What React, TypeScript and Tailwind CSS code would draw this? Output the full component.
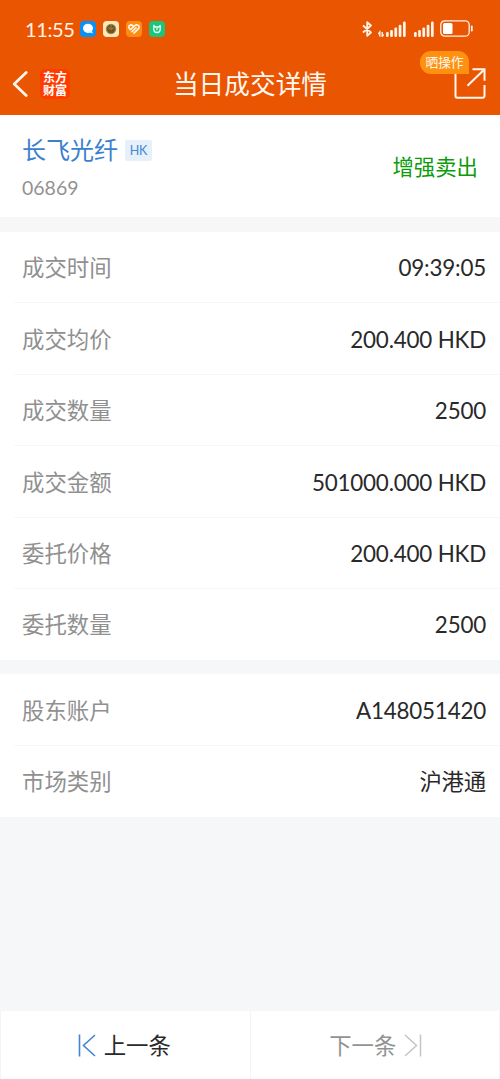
import React from 'react';

interface RowData {
  label: string;
  value: string;
}

const tradeRows: RowData[] = [
  { label: '成交时间', value: '09:39:05' },
  { label: '成交均价', value: '200.400 HKD' },
  { label: '成交数量', value: '2500' },
  { label: '成交金额', value: '501000.000 HKD' },
  { label: '委托价格', value: '200.400 HKD' },
  { label: '委托数量', value: '2500' },
];

const accountRows: RowData[] = [
  { label: '股东账户', value: 'A148051420' },
  { label: '市场类别', value: '沪港通' },
];

const Signal = () => (
  <svg className="w-5 h-4" viewBox="0 0 20 16" fill="#fff4e8">
    <rect x="0" y="11" width="2.7" height="5" rx="1.2" />
    <rect x="4.2" y="9" width="2.7" height="7" rx="1.2" />
    <rect x="8.4" y="6.5" width="2.7" height="9.5" rx="1.2" />
    <rect x="12.7" y="3.7" width="2.7" height="12.3" rx="1.2" />
    <rect x="17" y="0.5" width="2.7" height="15.5" rx="1.2" />
  </svg>
);

const StatusBar = () => (
  <div className="flex items-center h-[57px] pl-[25px] pr-[26px] text-[#fff4e8]">
    <span className="w-[49px] text-[20px] leading-none tracking-[-0.4px] whitespace-nowrap pt-px">11:55</span>
    <div className="flex gap-[7px] ml-[5.500px]">
      <svg className="w-4 h-4" viewBox="0 0 16 16">
        <rect width="16" height="16" rx="4" fill="#0a91f5" />
        <ellipse cx="8" cy="7.3" rx="5" ry="4.6" fill="#fff" />
        <path d="M8 11l4.800 1.600-1.300-4z" fill="#e4f4ff" />
      </svg>
      <svg className="w-4 h-4" viewBox="0 0 16 16">
        <rect width="16" height="16" rx="4" fill="#fdebbd" />
        <circle cx="8" cy="8" r="5.3" fill="#ad8c4c" />
        <circle cx="8" cy="8" r="4.200" fill="#6d5424" />
        <path d="M8 4v4M5 6.500l3 2 3-2" stroke="#a98338" strokeWidth="1" fill="none" />
      </svg>
      <svg className="w-4 h-4" viewBox="0 0 16 16">
        <rect width="16" height="16" rx="4" fill="#ff8b12" />
        <path d="M7 4.800C5.400 3.300 2.800 4 2.800 6c0 1.200.8 2 1.600 2.700L8.900 4.600c1.500-1.400 4.300-.8 4.300 1.400 0 1-.6 1.700-1.300 2.400L8 12.200M6 10.600l4-3.700" fill="none" stroke="#fff4e0" strokeWidth="1.700" strokeLinejoin="round" strokeLinecap="round" />
      </svg>
      <svg className="w-4 h-4" viewBox="0 0 16 16">
        <rect width="16" height="16" rx="4" fill="#1cc47c" />
        <path d="M4.800 4.500v4c0 2 1 3 3.200 3s3.200-1 3.200-3v-4L9.600 6H6.400L4.800 4.500M8 7.500v1" fill="none" stroke="#e8fff2" strokeWidth="1.300" strokeLinecap="round" strokeLinejoin="round" />
      </svg>
    </div>
    <div className="flex items-center ml-auto">
      <svg className="w-[11px] h-4" viewBox="0 0 11 16" fill="none" stroke="#fff4e8" strokeWidth="1.800" strokeLinejoin="round">
        <path d="M1 4.500l8 7-3.800 3.300V1.200L9 4.500l-8 7" />
      </svg>
      <svg className="w-[6px] h-4 ml-[5px]" viewBox="0 0 6 16" fill="none" stroke="#fff4e8" strokeWidth="1.400">
        <path d="M1.800 15.500V11L.3 13M4.200 11v4.500l1.500-2" />
      </svg>
      <div className="ml-[2px]"><Signal /></div>
      <div className="ml-[8px]"><Signal /></div>
      <svg className="w-[34px] h-[17px] ml-[6px]" viewBox="0 0 34 17">
        <rect x="0.8" y="0.8" width="28.400" height="15.400" rx="4" fill="none" stroke="#fff4e8" strokeWidth="1.300" />
        <rect x="3" y="3" width="9.500" height="11" rx="1.500" fill="#fff" />
        <path d="M31.800 6.500v4" stroke="#fff4e8" strokeWidth="1.800" strokeLinecap="round" />
      </svg>
    </div>
  </div>
);

const NavBar = () => (
  <div className="relative flex items-center h-[58px] pb-[4px] pl-[12px] pr-[14px]">
    <svg className="w-4 h-[26px]" viewBox="0 0 16 26" fill="none" stroke="#fff8f0" strokeWidth="2.700" strokeLinecap="round" strokeLinejoin="round">
      <path d="M14.200 1.500L2.200 13l12 11.500" />
    </svg>
    <div className="flex flex-col items-center justify-center w-[30px] h-[30px] ml-[12px] rounded-[5px] bg-[#ff3c00] text-white text-[12px] leading-[13.500px] font-bold">
      <span>东方</span>
      <span>财富</span>
    </div>
    <h1 className="absolute inset-x-0 top-[9px] text-center text-[25.700px] leading-9 text-[#fff8f0]">当日成交详情</h1>
    <svg className="w-[32px] h-[32px] ml-auto" viewBox="0 0 32 32" fill="none" stroke="#fff8f0" strokeWidth="2">
      <path d="M1.500 4v24a1.800 1.800 0 0 0 1.800 1.800h25.400a1.800 1.800 0 0 0 1.800-1.800V17M18.500 1.200h12v11.500M30.500 1.200L13.500 17.700" />
    </svg>
    <span className="absolute left-[420px] top-[-6px] w-[49px] h-[23px] rounded-[11px] rounded-br-none bg-[#ff9110] text-center text-[12.700px] leading-[23px] text-[#fff8f0] whitespace-nowrap">晒操作</span>
  </div>
);

const DetailRow = ({ label, value, last = false }: RowData & { last?: boolean }) => (
  <div className="pl-[14px]">
    <div className={`flex items-center justify-between h-[71.400px] pt-[2px] pl-2 pr-[14px] text-[22.400px] border-b ${last ? 'border-transparent' : 'border-[#f7f7f8]'}`}>
      <span className="text-[#909090]">{label}</span>
      <span className="tracking-[-0.2px] text-[#292929]">{value}</span>
    </div>
  </div>
);

const DetailList = ({ rows }: { rows: RowData[] }) => (
  <section className="bg-white">
    {rows.map((row, i) => (
      <DetailRow key={row.label} label={row.label} value={row.value} last={i === rows.length - 1} />
    ))}
  </section>
);

export default function App() {
  return (
    <div className="flex flex-col w-[500px] h-[1079px] overflow-hidden bg-[#f6f7f9] font-['Lato','Noto_Sans_CJK_SC',sans-serif]">
      <header className="h-[115px] shrink-0 bg-[#ea5502]">
        <StatusBar />
        <NavBar />
      </header>

      {/* Stock summary */}
      <section className="flex justify-between h-[102px] shrink-0 pl-[22px] pr-[22px] bg-white">
        <div className="pt-[17px]">
          <div className="flex items-center">
            <span className="text-[24px] leading-9 text-[#3a7fd0]">长飞光纤</span>
            <span className="w-[27px] h-[21px] ml-[7px] rounded-[2px] bg-[#e6f0fb] text-center text-[12.500px] leading-[21px] tracking-[-0.2px] text-[#4486d3]">HK</span>
          </div>
          <div className="mt-[6px] text-[19.500px] leading-7 text-[#929292]">06869</div>
        </div>
        <span className="mt-[34px] text-[21.400px] leading-9 text-[#0b9b0b]">增强卖出</span>
      </section>

      <div className="h-[15px] shrink-0 bg-[#f7f7f8]" />
      <DetailList rows={tradeRows} />
      <div className="h-[14px] shrink-0" />
      <DetailList rows={accountRows} />

      {/* Previous / next record */}
      <footer className="flex gap-px mt-auto h-[68px] shrink-0 px-px bg-[#f3f4f5] text-[22.400px]">
        <button className="flex flex-1 items-center justify-center pr-[2px] pt-px bg-white text-[#292929]">
          <svg className="w-[18px] h-[23px] mr-[8px] mb-px" viewBox="0 0 18 23" fill="none" stroke="#4384d1" strokeWidth="1.600">
            <path d="M1.500 0.500v22M17 1L5.500 11.500 17 22" />
          </svg>
          上一条
        </button>
        <button className="flex flex-1 items-center justify-center pl-[2px] pt-px bg-white text-[#929292]">
          下一条
          <svg className="w-[18px] h-[23px] ml-[8px] mb-px" viewBox="0 0 18 23" fill="none" stroke="#c4c4c4" strokeWidth="1.500">
            <path d="M16.500 0.500v22M1 1l11.500 10.500L1 22" />
          </svg>
        </button>
      </footer>
    </div>
  );
}
